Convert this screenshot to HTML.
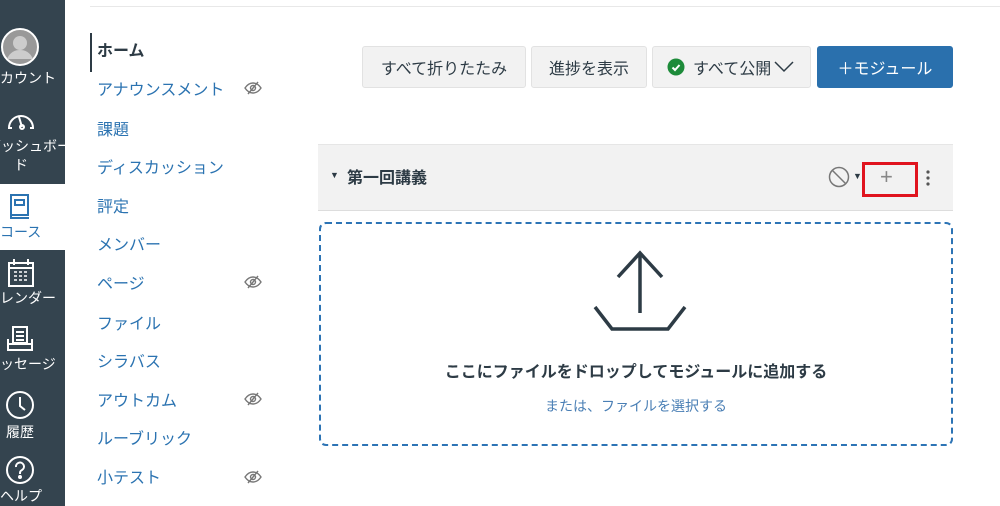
<!DOCTYPE html>
<html><head><meta charset="utf-8"><style>
*{margin:0;padding:0;box-sizing:border-box}
body{width:1000px;height:506px;overflow:hidden;background:#fff;font-family:"Liberation Sans","Noto Sans CJK JP",sans-serif;position:relative}
.sb{position:absolute;left:0;top:0;width:65px;height:506px;background:#34444f;overflow:hidden}
.sb .lb{position:absolute;color:#fff;font-size:14px;white-space:nowrap;letter-spacing:0}
.sb svg{position:absolute}
.act{position:absolute;left:0;top:184px;width:65px;height:66px;background:#fff}
.nav{position:absolute;left:97px;font-size:16px;color:#2b73b1;white-space:nowrap}
.eye{position:absolute;left:244px}
.btn{position:absolute;top:46px;height:42px;background:#f2f2f2;border:1px solid #e2e2e2;border-radius:3px;font-size:16px;color:#2d3b45;display:flex;align-items:center;justify-content:center}
</style></head><body>
<div style="position:absolute;left:90px;top:6px;width:910px;height:1px;background:#e8e8e8"></div>
<div class="sb">
<svg style="left:1px;top:28px" width="38" height="38" viewBox="0 0 38 38"><circle cx="19" cy="19" r="18" fill="#999" stroke="#fff" stroke-width="2"/><circle cx="19" cy="15" r="7" fill="#ccc"/><path d="M6 31c3-7 8-9 13-9s10 2 13 9" fill="#ccc"/></svg>
<div class="lb" style="top:68px;left:-14px">アカウント</div>
<svg style="left:6px;top:106px" width="30" height="26" viewBox="0 0 30 26" fill="none" stroke="#fff" stroke-width="2"><path d="M6 22H3a12 12 0 1 1 24 0h-3"/><path d="M13 11l3 10" /><circle cx="16" cy="21" r="2"/></svg>
<div class="lb" style="top:136px;left:-13px">ダッシュボー</div>
<div class="lb" style="top:155px;left:14px">ド</div>
</div>
<div class="act"></div>
<svg style="position:absolute;left:8px;top:193px" width="24" height="28" viewBox="0 0 24 28" fill="none" stroke="#2b73b1" stroke-width="2"><rect x="3" y="2" width="17" height="20"/><rect x="7" y="7" width="9" height="5"/><path d="M3 22v3h18"/></svg>
<div style="position:absolute;left:0px;top:222px;color:#2b73b1;font-size:14px">コース</div>
<div class="sb" style="top:250px;height:256px;background:#34444f">
<svg style="left:7px;top:8px" width="28" height="30" viewBox="0 0 28 30" fill="none" stroke="#fff" stroke-width="2"><rect x="2" y="5" width="24" height="23"/><path d="M2 10h24M7 1v6M21 1v6"/><path d="M7 14h3M12 14h3M17 14h3M7 18h3M12 18h3M17 18h3M7 22h3M12 22h3M17 22h3" stroke-width="1.5"/></svg>
<div class="lb" style="top:38px;left:-14px">カレンダー</div>
<svg style="left:6px;top:76px" width="28" height="26" viewBox="0 0 28 26" fill="none" stroke="#fff" stroke-width="2"><rect x="7" y="1" width="14" height="16"/><path d="M10 6h8M10 10h8M10 14h8"/><path d="M2 13v11h24V13"/><path d="M2 18h24"/></svg>
<div class="lb" style="top:104px;left:-14px">メッセージ</div>
<svg style="left:5px;top:140px" width="30" height="30" viewBox="0 0 30 30" fill="none" stroke="#fff" stroke-width="2"><circle cx="15" cy="15" r="13"/><path d="M15 7v9l5 4"/></svg>
<div class="lb" style="top:172px;left:6px">履歴</div>
<svg style="left:5px;top:205px" width="30" height="30" viewBox="0 0 30 30" fill="none" stroke="#fff" stroke-width="2"><circle cx="15" cy="15" r="13"/><path d="M11 12a4 4 0 1 1 6 3c-2 1-2 2-2 4"/><circle cx="15" cy="22" r="1" fill="#fff"/></svg>
<div class="lb" style="top:236px;left:0px">ヘルプ</div>
</div>

<div style="position:absolute;left:90px;top:33px;width:2px;height:39px;background:#2d3b45"></div>
<div class="nav" style="top:37px;color:#2d3b45;font-weight:bold">ホーム</div>
<div class="nav" style="top:76px">アナウンスメント</div>
<div class="nav" style="top:116px">課題</div>
<div class="nav" style="top:154px">ディスカッション</div>
<div class="nav" style="top:193px">評定</div>
<div class="nav" style="top:231px">メンバー</div>
<div class="nav" style="top:270px">ページ</div>
<div class="nav" style="top:310px">ファイル</div>
<div class="nav" style="top:348px">シラバス</div>
<div class="nav" style="top:387px">アウトカム</div>
<div class="nav" style="top:425px">ルーブリック</div>
<div class="nav" style="top:464px">小テスト</div>
<svg class="eye" style="top:81px" width="18" height="14" viewBox="0 0 18 14" fill="none" stroke="#777" stroke-width="1.4"><path d="M1 7c2-3 5-5 8-5s6 2 8 5c-2 3-5 5-8 5S3 10 1 7z"/><circle cx="9" cy="7" r="2.5"/><path d="M14 1L4 13"/></svg>
<svg class="eye" style="top:275px" width="18" height="14" viewBox="0 0 18 14" fill="none" stroke="#777" stroke-width="1.4"><path d="M1 7c2-3 5-5 8-5s6 2 8 5c-2 3-5 5-8 5S3 10 1 7z"/><circle cx="9" cy="7" r="2.5"/><path d="M14 1L4 13"/></svg>
<svg class="eye" style="top:392px" width="18" height="14" viewBox="0 0 18 14" fill="none" stroke="#777" stroke-width="1.4"><path d="M1 7c2-3 5-5 8-5s6 2 8 5c-2 3-5 5-8 5S3 10 1 7z"/><circle cx="9" cy="7" r="2.5"/><path d="M14 1L4 13"/></svg>
<svg class="eye" style="top:470px" width="18" height="14" viewBox="0 0 18 14" fill="none" stroke="#777" stroke-width="1.4"><path d="M1 7c2-3 5-5 8-5s6 2 8 5c-2 3-5 5-8 5S3 10 1 7z"/><circle cx="9" cy="7" r="2.5"/><path d="M14 1L4 13"/></svg>

<div class="btn" style="left:362px;width:164px">すべて折りたたみ</div>
<div class="btn" style="left:531px;width:116px">進捗を表示</div>
<div class="btn" style="left:652px;width:159px;justify-content:flex-start;padding-left:14px"><svg width="18" height="18" viewBox="0 0 18 18" style="margin-right:8px"><circle cx="9" cy="9" r="8.5" fill="#1d8b3a"/><path d="M5.5 9.5l2.5 2.5 4.5-5" fill="none" stroke="#fff" stroke-width="2"/></svg>すべて公開<svg width="20" height="12" viewBox="0 0 20 12" style="margin-left:3px"><path d="M1 1l9 9 9-9" fill="none" stroke="#2d3b45" stroke-width="1.5"/></svg></div>
<div class="btn" style="left:817px;width:136px;background:#2a70ad;border-color:#2a70ad;color:#fff">＋モジュール</div>

<div style="position:absolute;left:318px;top:144px;width:635px;height:67px;background:#f2f2f2;border-top:1px solid #e6e6e6;border-bottom:1px solid #ddd"></div>
<div style="position:absolute;left:330px;top:170px;font-size:9px;color:#2d3b45">▼</div>
<div style="position:absolute;left:347px;top:164px;font-size:16px;font-weight:bold;color:#2d3b45">第一回講義</div>
<svg style="position:absolute;left:828px;top:166px" width="22" height="22" viewBox="0 0 22 22" fill="none" stroke="#777" stroke-width="1.5"><circle cx="11" cy="11" r="9.5"/><path d="M4.5 4.5l13 13"/></svg>
<div style="position:absolute;left:853px;top:171px;font-size:9px;color:#2d3b45">▼</div>
<div style="position:absolute;left:862px;top:162px;width:56px;height:35px;border:3px solid #e0141e"></div>
<div style="position:absolute;left:880px;top:164px;font-size:22px;color:#888;font-weight:300">+</div>
<svg style="position:absolute;left:925px;top:169px" width="6" height="18" viewBox="0 0 6 18"><circle cx="3" cy="3" r="1.6" fill="#555"/><circle cx="3" cy="9" r="1.6" fill="#555"/><circle cx="3" cy="15" r="1.6" fill="#555"/></svg>

<div style="position:absolute;left:319px;top:222px;width:634px;height:224px;border:2px dashed #2d74b5;border-radius:7px"></div>
<svg style="position:absolute;left:590px;top:250px" width="100" height="85" viewBox="0 0 100 85" fill="none" stroke="#2d3b45" stroke-width="3.5"><path d="M50 3v60M28 27L50 3l22 24"/><path d="M5 57l17 22h56l17-22"/></svg>
<div style="position:absolute;left:319px;top:358px;width:634px;text-align:center;font-size:16px;font-weight:bold;color:#2d3b45">ここにファイルをドロップしてモジュールに追加する</div>
<div style="position:absolute;left:319px;top:396px;width:634px;text-align:center;font-size:14px;color:#4a7fb5">または、ファイルを選択する</div>
</body></html>
